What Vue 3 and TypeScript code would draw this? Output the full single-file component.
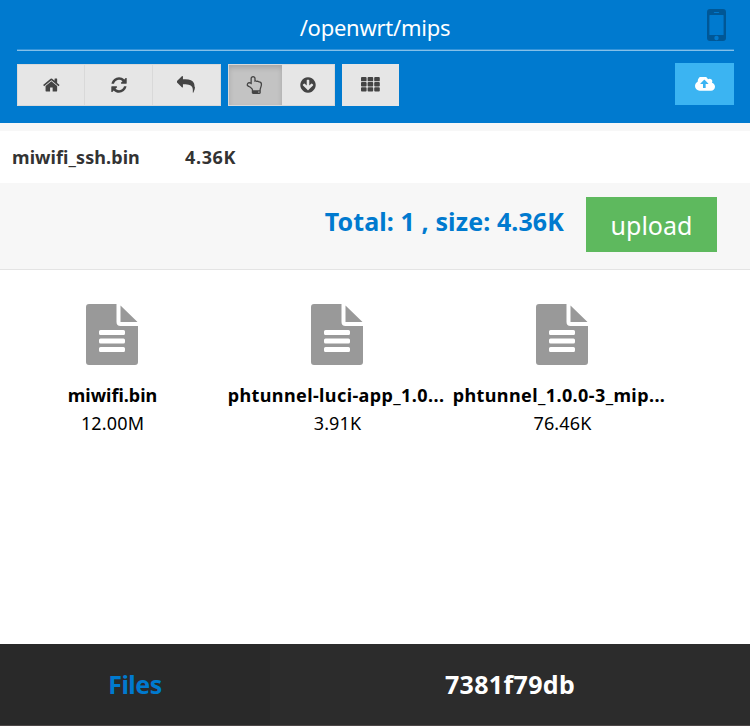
<script setup lang="ts">
interface FileItem {
  name: string
  size: string
  cls: string
}

const path = '/openwrt/mips'
const queued = { name: 'miwifi_ssh.bin', size: '4.36K' }
const files: FileItem[] = [
  { name: 'miwifi.bin', size: '12.00M', cls: 'short' },
  { name: 'phtunnel-luci-app_1.0...', size: '3.91K', cls: 'clipped' },
  { name: 'phtunnel_1.0.0-3_mip...', size: '76.46K', cls: 'clipped narrow' },
]

const icons = {
  home: 'M1408 992v480q0 26-19 45t-45 19h-384v-384h-256v384h-384q-26 0-45-19t-19-45v-480q0-1 .5-3t.5-3l575-474 575 474q1 2 1 6zm223-69l-62 74q-8 9-21 11h-3q-13 0-21-7l-692-577-692 577q-12 8-24 7-13-2-21-11l-62-74q-8-10-7-23.5t11-21.5l719-599q32-26 76-26t76 26l244 204v-195q0-14 9-23t23-9h192q14 0 23 9t9 23v408l219 182q10 8 11 21.5t-7 23.5z',
  refresh: 'M1639 1056q0 5-1 7-64 268-268 434.5t-478 166.5q-146 0-282.5-55t-243.5-157l-129 129q-19 19-45 19t-45-19-19-45v-448q0-26 19-45t45-19h448q26 0 45 19t19 45-19 45l-137 137q71 66 161 102t187 36q134 0 250-65t186-179q11-17 53-117 8-23 30-23h192q13 0 22.5 9.5t9.5 22.5zm25-800v448q0 26-19 45t-45 19h-448q-26 0-45-19t-19-45 19-45l138-138q-148-137-349-137-134 0-250 65t-186 179q-11 17-53 117-8 23-30 23h-199q-13 0-22.5-9.5t-9.5-22.5v-7q65-268 270-434.5t480-166.5q146 0 284 55.5t245 156.5l130-129q19-19 45-19t45 19 19 45z',
  reply: 'M1792 1120q0 166-127 451-3 7-10.5 24t-13.5 30-13 22q-12 17-28 17-15 0-23.5-10t-8.5-25q0-9 2.5-26.5t2.5-23.5q5-68 5-123 0-112-19.5-200.5t-54-153.5-89-112-115-80-141.5-47-161.5-24.5-181.5-7.5h-224v256q0 26-19 45t-45 19-45-19l-512-512q-19-19-19-45t19-45l512-512q19-19 45-19t45 19 19 45v256h224q713 0 875 403 53 134 53 333z',
  hand: 'M1344 1600q0-26-19-45t-45-19-45 19-19 45 19 45 45 19 45-19 19-45zm128-764q0-189-167-189-26 0-56 5-16-30-52.5-47.5t-73.5-17.5-69 18q-50-53-119-53-25 0-55.5 10t-47.5 25v-331q0-52-38-90t-90-38q-51 0-89.5 39t-38.5 89v576q-20 0-48.5-15t-55-33-68-33-84.5-15q-67 0-97.5 44.5t-30.5 115.5q0 24 139 90 44 24 65 37 64 40 145 112 81 71 106 101 57 69 57 140v32h640v-32q0-72 32-167t64-193.5 32-179.5zm128-5q0 133-69 322-59 164-59 223v288q0 53-37.5 90.5t-90.5 37.5h-640q-53 0-90.5-37.5t-37.5-90.5v-288q0-10-4.5-21.5t-14-23.5-18-22.5-22.5-24-21.5-20.5-21.5-19-17-14q-74-65-129-100-21-13-62-33t-72-37-63-40.5-49.5-55-17.5-69.5q0-125 67-206.5t189-81.5q68 0 128 22v-374q0-104 76-180t179-76q105 0 181 75.5t76 180.5v169q62 4 119 37 21-3 43-3 101 0 178 60 139-1 219.5 85t80.5 227z',
  down: 'M1412 897q0-27-18-45l-91-91q-18-18-45-18t-45 18l-189 189v-502q0-26-19-45t-45-19h-128q-26 0-45 19t-19 45v502l-189-189q-19-19-45-19t-45 19l-91 91q-18 18-18 45t18 45l362 362 91 91q18 18 45 18t45-18l91-91 362-362q18-18 18-45zm252-1q0 209-103 385.5t-279.5 279.5-385.5 103-385.5-103-279.5-279.5-103-385.5 103-385.5 279.5-279.5 385.5-103 385.5 103 279.5 279.5 103 385.5z',
  cloud: 'M1280 864q0-14-9-23l-352-352q-9-9-23-9t-23 9l-351 351q-10 12-10 24 0 14 9 23t23 9h224v352q0 13 9.5 22.5t22.5 9.5h192q13 0 22.5-9.5t9.5-22.5v-352h224q13 0 22.5-9.5t9.5-22.5zm640 288q0 159-112.5 271.5t-271.5 112.5h-1088q-185 0-316.5-131.5t-131.5-316.5q0-130 70-240t188-165q-2-30-2-43 0-212 150-362t362-150q156 0 285.5 87t188.5 231q71-62 166-62 106 0 181 75t75 181q0 76-41 138 130 31 213.5 135.5t83.5 238.5z',
}
const cells = [0, 1, 2, 3, 4, 5, 6, 7, 8]
</script>

<template>
  <div class="page">
    <header class="header">
      <div class="title-row">
        <span class="side"></span>
        <span class="path">{{ path }}</span>
        <span class="side">
          <svg class="phone" viewBox="0 0 19 32">
            <path fill-rule="evenodd" d="M3 0h13q3 0 3 3v26q0 3-3 3H3q-3 0-3-3V3q0-3 3-3zM3 6q-.6 0-.6 .6v18.800q0 .6 .6 .6h13q.6 0 .6-.6V6.600q0-.6-.6-.6zM7.500 3q-.7 0-.7.5t.7.5h4q.7 0 .7-.5T11.500 3zM9.500 26.800a2.200 2.200 0 1 0 0 4.400a2.200 2.200 0 1 0 0-4.400z" />
          </svg>
        </span>
      </div>
      <div class="toolbar">
        <div class="group nav">
          <button class="btn"><svg class="ic" viewBox="0 0 1792 1792"><path :d="icons.home" /></svg></button>
          <button class="btn"><svg class="ic" viewBox="0 0 1792 1792"><path :d="icons.refresh" /></svg></button>
          <button class="btn"><svg class="ic" viewBox="0 0 1792 1792"><path :d="icons.reply" /></svg></button>
        </div>
        <div class="group mode">
          <button class="btn active"><svg class="ic" viewBox="0 0 1792 1792"><path :d="icons.hand" /></svg></button>
          <button class="btn"><svg class="ic" viewBox="0 0 1792 1792"><path :d="icons.down" /></svg></button>
        </div>
        <button class="btn grid-btn">
          <svg class="th" viewBox="0 0 19 15">
            <rect v-for="c in cells" :key="c" :x="(c % 3) * 6.6" :y="Math.floor(c / 3) * 5.1" width="5.6" height="4.3" rx="0.9" />
          </svg>
        </button>
        <button class="btn cloud-btn"><svg class="cloud" viewBox="0 256 1920 1280"><path :d="icons.cloud" /></svg></button>
      </div>
    </header>

    <section class="queue">
      <div class="queue-row">
        <span class="q-name">{{ queued.name }}</span>
        <span class="q-size">{{ queued.size }}</span>
      </div>
      <div class="summary">
        <span class="total">Total: 1 , size: 4.36K</span>
        <button class="upload"><span>upload</span></button>
      </div>
    </section>

    <main class="files">
      <div v-for="f in files" :key="f.name" class="file" :class="f.cls">
        <svg class="doc" viewBox="0 0 52 61">
          <path fill-rule="evenodd" d="M3 0H30.500V18q0 4 4 4H52V58q0 3-3 3H3q-3 0-3-3V3q0-3 3-3zM14.500 26q-1.500 0-1.500 1.500v2q0 1.500 1.500 1.500h23q1.500 0 1.500-1.500v-2q0-1.500-1.500-1.500zM14.500 34.500q-1.500 0-1.500 1.500v2q0 1.500 1.500 1.500h23q1.500 0 1.500-1.500v-2q0-1.500-1.500-1.500zM14.500 43q-1.500 0-1.500 1.500v2q0 1.500 1.500 1.500h23q1.500 0 1.500-1.500v-2q0-1.500-1.500-1.500zM34.500 1.500V18H51.500z" />
        </svg>
        <div class="f-name"><span>{{ f.name }}</span></div>
        <div class="f-size"><span>{{ f.size }}</span></div>
      </div>
    </main>

    <footer class="footer">
      <div class="tab"><span>Files</span></div>
      <div class="device"><span>7381f79db</span></div>
    </footer>
  </div>
</template>

<style>
body {
  margin: 0;
}
</style>

<style scoped>
.page {
  width: 750px;
  height: 726px;
  display: flex;
  flex-direction: column;
  background: #fff;
  font-family: 'Noto Sans', 'Open Sans', sans-serif;
  overflow: hidden;
}
.page * {
  box-sizing: border-box;
}
span {
  white-space: nowrap;
}
button {
  font-family: inherit;
  border: 0;
  margin: 0;
  padding: 0;
}
svg {
  display: block;
  flex: none;
}
.header {
  height: 123px;
  flex: none;
  background: #007acf;
  padding: 0 16px 0 17px;
}
.title-row {
  height: 51px;
  display: flex;
  justify-content: space-between;
  border-bottom: 1px solid #84c0e9;
  box-shadow: inset 0 -1px 0 #3594d9;
}
.side {
  width: 28px;
  padding: 9px 0 0 1px;
}
.phone {
  width: 19px;
  height: 32px;
  fill: #005796;
}
.path {
  color: #fff;
  font-size: 22px;
  letter-spacing: -0.25px;
  line-height: 30px;
  padding: 12px 1px 0 0;
}
.toolbar {
  display: flex;
  padding-top: 13px;
}
.group {
  display: flex;
  height: 42px;
  border: 1px solid #d9d9d9;
  margin-right: 7px;
}
.nav {
  width: 204px;
}
.mode {
  width: 107px;
}
.btn {
  flex: 1;
  display: flex;
  align-items: center;
  justify-content: center;
  background: #e6e6e6;
}
.nav .btn {
  flex: 0 0 68px;
}
.nav .btn:first-child {
  flex-basis: 66px;
}
.nav .btn + .btn {
  border-left: 1px solid #d9d9d9;
}
.btn.active {
  background: #c3c3c3;
  box-shadow: inset 0 3px 5px rgba(0, 0, 0, 0.15);
}
.ic {
  width: 18px;
  height: 18px;
  fill: #444;
  margin-bottom: 1px;
}
.nav .btn:first-child .ic {
  margin-left: 2px;
}
.nav .btn:last-child .ic {
  margin-right: 2px;
}
.grid-btn {
  flex: none;
  width: 57px;
  height: 42px;
}
.th {
  width: 19px;
  height: 15px;
  fill: #444;
  margin-bottom: 2px;
}
.cloud-btn {
  flex: none;
  width: 59px;
  height: 42px;
  margin: -1px 0 0 auto;
  background: #3bb4f2;
}
.cloud {
  width: 20px;
  height: 14px;
  fill: #fff;
}
.queue {
  flex: none;
  height: 147px;
  padding-top: 8px;
  background: #f7f7f7;
  border-bottom: 1px solid #e4e4e4;
}
.queue-row {
  height: 52px;
  display: flex;
  background: #fff;
  padding-left: 12px;
  color: #333;
  font-size: 18px;
  font-weight: 700;
  line-height: 52px;
}
.q-name {
  width: 173px;
  letter-spacing: 0.08px;
}
.q-size {
  letter-spacing: 0.65px;
}
.summary {
  display: flex;
  justify-content: flex-end;
  padding: 14px 33px 0 0;
}
.total {
  color: #007acf;
  font-size: 25px;
  font-weight: 700;
  letter-spacing: 0.11px;
  line-height: 49px;
  margin-right: 22px;
}
.upload {
  width: 131px;
  height: 55px;
  background: #5eb95e;
  color: #fff;
  font-size: 25px;
}
.files {
  flex: 1;
  display: flex;
  align-items: flex-start;
}
.file {
  width: 225px;
  display: flex;
  flex-direction: column;
  align-items: center;
  padding-top: 34px;
  color: #000;
}
.doc {
  width: 52px;
  height: 61px;
  margin-right: 1px;
  fill: #999;
}
.f-name {
  font-size: 18px;
  font-weight: 700;
  line-height: 28px;
  margin-top: 16px;
}
.clipped .f-name {
  letter-spacing: 0.4px;
  padding-right: 3px;
}
.narrow .f-name {
  padding-right: 7px;
}
.f-size {
  font-size: 18px;
  letter-spacing: 0.15px;
  line-height: 28px;
}
.footer {
  flex: none;
  height: 82px;
  display: flex;
  background: #2c2c2c;
  border-bottom: 1px solid #4c4646;
  font-size: 25px;
  font-weight: 700;
  line-height: 81px;
  text-align: center;
}
.tab {
  width: 270px;
  background: #292929;
  color: #007acf;
  letter-spacing: -0.5px;
}
.device {
  flex: 1;
  color: #fff;
  letter-spacing: 0.35px;
}
</style>
